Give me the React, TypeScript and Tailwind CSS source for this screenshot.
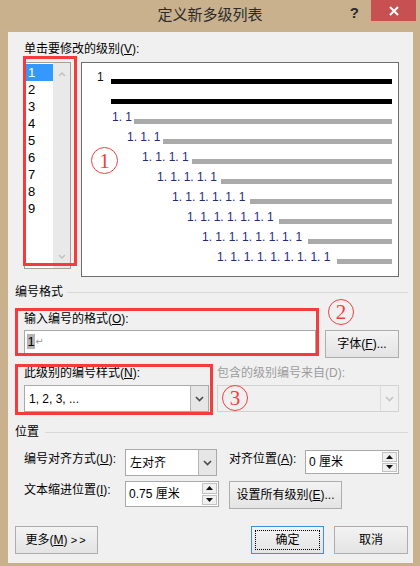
import React from "react";

const Chevron = ({ color = "#555" }: { color?: string }) => (
  <svg width="9" height="6" viewBox="0 0 9 6">
    <path d="M1 1 L4.5 4.5 L8 1" fill="none" stroke={color} strokeWidth="1.6" />
  </svg>
);

const Select = ({ text, cls, disabled }: { text: string; cls: string; disabled?: boolean }) => (
  <div
    className={
      "flex border " +
      (disabled ? "border-[#d2d2d2] bg-[#f0f0f0] " : "border-[#a9a9a9] bg-white ") +
      cls
    }
  >
    <div className="flex-1 flex items-center pl-[4px] text-[12px] leading-[16px] text-black">{text}</div>
    <div
      className={
        "w-[18px] flex items-center justify-center border-l " +
        (disabled ? "border-[#dcdcdc] bg-[#f0f0f0]" : "border-[#b5b5b5] bg-[#e6e6e6]")
      }
    >
      <Chevron color={disabled ? "#c4c4c4" : "#4a4a4a"} />
    </div>
  </div>
);

const Spin = ({ text, cls }: { text: string; cls: string }) => (
  <div className={"flex border border-[#a9a9a9] bg-white " + cls}>
    <div className="flex-1 flex items-center pl-[3px] text-[12px] leading-[16px] text-black">{text}</div>
    <div className="w-[17px] flex flex-col gap-[1px] p-[1px]">
      <div className="flex-1 border border-[#c2c2c2] bg-[#f0f0f0] flex items-center justify-center">
        <svg width="7" height="4" viewBox="0 0 7 4">
          <path d="M0 4 L3.5 0 L7 4 Z" fill="#111" />
        </svg>
      </div>
      <div className="flex-1 border border-[#c2c2c2] bg-[#f0f0f0] flex items-center justify-center">
        <svg width="7" height="4" viewBox="0 0 7 4">
          <path d="M0 0 L3.5 4 L7 0 Z" fill="#111" />
        </svg>
      </div>
    </div>
  </div>
);

const Btn = ({ children, cls }: { children: React.ReactNode; cls: string }) => (
  <div
    className={
      "flex items-center justify-center border border-[#adadad] bg-linear-to-b from-[#f3f3f3] to-[#e4e4e4] text-[12px] leading-[16px] text-black " +
      cls
    }
  >
    {children}
  </div>
);

const Circled = ({ n, cls }: { n: string; cls: string }) => (
  <div
    className={
      "absolute rounded-full border border-[#f04040] flex items-center justify-center text-[#f04040] font-['Liberation_Serif',serif] text-[21px] leading-none " +
      cls
    }
  >
    <span className="mt-[1px]">{n}</span>
  </div>
);

const levels = [
  { pl: "pl-[30px]", w: "w-[22px]", t: "1. 1" },
  { pl: "pl-[45px]", w: "w-[36px]", t: "1. 1. 1" },
  { pl: "pl-[60px]", w: "w-[50px]", t: "1. 1. 1. 1" },
  { pl: "pl-[75px]", w: "w-[64px]", t: "1. 1. 1. 1. 1" },
  { pl: "pl-[90px]", w: "w-[78px]", t: "1. 1. 1. 1. 1. 1" },
  { pl: "pl-[105px]", w: "w-[92px]", t: "1. 1. 1. 1. 1. 1. 1" },
  { pl: "pl-[120px]", w: "w-[106px]", t: "1. 1. 1. 1. 1. 1. 1. 1" },
  { pl: "pl-[135px]", w: "w-[120px]", t: "1. 1. 1. 1. 1. 1. 1. 1. 1" },
];

export default function App() {
  return (
    <div className="w-[420px] h-[566px] bg-[#c9b18e] flex flex-col font-['Liberation_Sans','Noto_Sans_CJK_SC',sans-serif] overflow-hidden">
      {/* Title bar */}
      <div className="h-[32px] grid grid-cols-[1fr_auto_1fr]">
        <div />
        <div className="flex items-center text-[15px] leading-[20px] text-[#2b2b2b] pb-[2px]">定义新多级列表</div>
        <div className="flex justify-end items-start">
          <div className="mt-[4px] mr-[12px] text-[15px] leading-[18px] font-bold text-[#2a2a2a]">?</div>
          <div className="w-[45px] h-[21px] mr-[4px] bg-[#c75050] flex items-center justify-center">
            <svg width="10" height="10" viewBox="0 0 10 10">
              <path d="M1 1 L9 9 M9 1 L1 9" stroke="#fff" strokeWidth="2" />
            </svg>
          </div>
        </div>
      </div>

      {/* Body */}
      <div className="flex-1 ml-[8px] mr-[7px] mb-[3px] bg-[#f0f0f0] relative pl-[7px] pr-[5px] text-[12px] leading-[16px] text-black">
        <div className="pt-[9px] ml-[9px] h-[25px]">
          单击要修改的级别(<u>V</u>):
        </div>

        <div className="flex mt-[5px] ml-[9px] items-start">
          {/* level list */}
          <div className="w-[47px] h-[207px] border border-[#a0a0a0] bg-white flex">
            <div className="w-[28px] pl-[1px] pt-[1px] flex flex-col text-[13px]">
              {["1", "2", "3", "4", "5", "6", "7", "8", "9"].map((d, i) => (
                <div
                  key={d}
                  className={
                    "h-[17px] leading-[17px] pl-[2px] " + (i === 0 ? "bg-[#3399ff] text-white" : "text-black")
                  }
                >
                  {d}
                </div>
              ))}
            </div>
            <div className="flex-1 bg-[#e9e9e9] flex flex-col items-center justify-between py-[9px]">
              <svg width="8" height="5" viewBox="0 0 8 5">
                <path d="M1 4 L4 1 L7 4" fill="none" stroke="#c2c2c2" strokeWidth="1.5" />
              </svg>
              <svg width="8" height="5" viewBox="0 0 8 5">
                <path d="M1 1 L4 4 L7 1" fill="none" stroke="#c2c2c2" strokeWidth="1.5" />
              </svg>
            </div>
          </div>

          {/* preview */}
          <div className="ml-[10px] w-[318px] h-[215px] border border-[#6e6e6e] bg-white pt-[6px] pr-[6px] flex flex-col">
            <div className="h-[20px] flex items-start pl-[15px]">
              <span className="w-[14px] mt-[1px] leading-[14px] text-[12px] text-[#111]">1</span>
              <div className="flex-1 h-[5px] mt-[10px] bg-black" />
            </div>
            <div className="h-[20px] flex items-start pl-[29px]">
              <div className="flex-1 h-[5px] mt-[10px] bg-black" />
            </div>
            {levels.map((l) => (
              <div key={l.t} className={"h-[20px] flex items-start " + l.pl}>
                <span className={"shrink-0 whitespace-nowrap overflow-hidden mt-[1px] leading-[14px] text-[12px] text-[#222d7a] " + l.w}>
                  {l.t}
                </span>
                <div className="flex-1 h-[5px] mt-[10px] bg-[#aaaaaa]" />
              </div>
            ))}
          </div>
        </div>

        {/* 编号格式 */}
        <div className="mt-[7px] flex items-center gap-[4px]">
          <span>编号格式</span>
          <div className="flex-1 h-px bg-[#d8d8d8]" />
        </div>

        <div className="mt-[11px] ml-[9px]">
          输入编号的格式(<u>O</u>):
        </div>
        <div className="mt-[3px] ml-[9px] flex items-start">
          <div className="w-[292px] h-[26px] border border-[#a9a9a9] bg-white flex items-start pt-[3px] pl-[2px]">
            <span className="bg-[#b4b4b4] text-[13px] leading-[15px] px-[0.5px]">1</span>
            <span className="text-[10px] leading-[15px] text-[#9a9a9a] font-['DejaVu_Sans',sans-serif]">↵</span>
          </div>
          <Btn cls="ml-[9px] w-[74px] h-[28px]">
            <span>
              字体(<u>F</u>)...
            </span>
          </Btn>
        </div>

        <div className="mt-[7px] ml-[9px] flex">
          <div className="w-[193px]">
            此级别的编号样式(<u>N</u>):
          </div>
          <div className="text-[#9c9c9c]">包含的级别编号来自(D):</div>
        </div>
        <div className="mt-[4px] ml-[9px] flex gap-[8px]">
          <Select text="1, 2, 3, ..." cls="w-[185px] h-[27px]" />
          <Select text="" cls="w-[182px] h-[27px]" disabled />
        </div>

        {/* 位置 */}
        <div className="mt-[12px] flex items-center gap-[6px]">
          <span>位置</span>
          <div className="flex-1 h-px bg-[#d8d8d8]" />
        </div>

        <div className="mt-[9px] ml-[9px] flex items-start h-[27px]">
          <div className="w-[101px] mt-[2px]">
            编号对齐方式(<u>U</u>):
          </div>
          <Select text="左对齐" cls="w-[92px] h-[27px]" />
          <div className="ml-[12px] w-[76px] mt-[2px]">
            对齐位置(<u>A</u>):
          </div>
          <Spin text="0 厘米" cls="w-[94px] h-[24px] mt-[1px]" />
        </div>

        <div className="mt-[5px] ml-[9px] flex items-start h-[28px]">
          <div className="w-[101px] mt-[1px]">
            文本缩进位置(<u>I</u>):
          </div>
          <Spin text="0.75 厘米" cls="w-[94px] h-[26px]" />
          <Btn cls="ml-[10px] w-[113px] h-[28px]">
            <span>
              设置所有级别(<u>E</u>)...
            </span>
          </Btn>
        </div>

        <div className="mt-[17px] flex items-start">
          <Btn cls="w-[83px] h-[28px]">
            <span>
              更多(<u>M</u>) <span className="tracking-[2px] text-[11px]">&gt;&gt;</span>
            </span>
          </Btn>
          <div className="ml-[153px] w-[73px] h-[28px] border border-[#3c8fe6] bg-linear-to-b from-[#f3f3f3] to-[#e4e4e4] p-[3px]">
            <div className="w-full h-full border border-dotted border-black flex items-center justify-center">确定</div>
          </div>
          <Btn cls="ml-[10px] w-[74px] h-[28px]">取消</Btn>
        </div>

        {/* annotations */}
        <div className="absolute left-[15px] top-[24px] w-[54px] h-[210px] border-[3px] border-[#f53b3b]" />
        <div className="absolute left-[7px] top-[276px] w-[304px] h-[48px] border-[3px] border-[#f53b3b]" />
        <div className="absolute left-[7px] top-[332px] w-[198px] h-[51px] border-[3px] border-[#f53b3b]" />
        <Circled n="1" cls="left-[83px] top-[115px] w-[27px] h-[27px]" />
        <Circled n="2" cls="left-[320px] top-[267px] w-[26px] h-[26px]" />
        <Circled n="3" cls="left-[214px] top-[353px] w-[26px] h-[26px]" />
      </div>
    </div>
  );
}
